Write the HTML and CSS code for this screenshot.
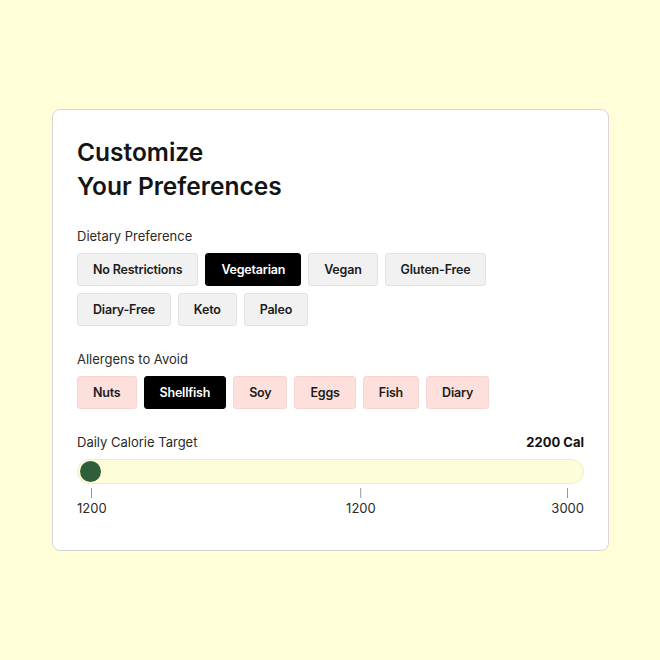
FILE: index.html
```html
<!DOCTYPE html>
<html>
<head>
<meta charset="utf-8">
<link rel="stylesheet" href="styles.css">
</head>
<body>
<div class="page">
  <div class="card">
    <h1 class="title">Customize<br>Your Preferences</h1>

    <div class="section">
      <div class="label">Dietary Preference</div>
      <div class="chips">
        <span class="chip">No Restrictions</span>
        <span class="chip active">Vegetarian</span>
        <span class="chip">Vegan</span>
        <span class="chip">Gluten-Free</span>
        <span class="chip">Diary-Free</span>
        <span class="chip">Keto</span>
        <span class="chip">Paleo</span>
      </div>
    </div>

    <div class="section">
      <div class="label">Allergens to Avoid</div>
      <div class="chips">
        <span class="chip pink">Nuts</span>
        <span class="chip active">Shellfish</span>
        <span class="chip pink">Soy</span>
        <span class="chip pink">Eggs</span>
        <span class="chip pink">Fish</span>
        <span class="chip pink">Diary</span>
      </div>
    </div>

    <div class="section">
      <div class="label-row">
        <span class="label">Daily Calorie Target</span>
        <span class="value">2200 Cal</span>
      </div>
      <div class="track">
        <span class="thumb"></span>
      </div>
      <div class="scale">
        <div class="mark"><span class="tick"></span><span class="num">1200</span></div>
        <div class="mark mid" style="left: 56%"><span class="tick"></span><span class="num">1200</span></div>
        <div class="mark"><span class="tick"></span><span class="num">3000</span></div>
      </div>
    </div>
  </div>
</div>
</body>
</html>
```

FILE: styles.css
```css
* { box-sizing: border-box; }
html, body {
  margin: 0;
  padding: 0;
  background: #fffed9;
  font-family: Inter, "Liberation Sans", sans-serif;
  color: #111;
}
.page {
  width: 660px;
  height: 660px;
  padding: 109px 51px 0 52px;
}
.card {
  background: #fff;
  border: 1px solid #d6d6d6;
  border-radius: 8px;
  padding: 25px 24px 30px 24px;
  height: 442px;
}
.title {
  margin: 0;
  font-size: 24.5px;
  line-height: 34px;
  font-weight: 600;
  letter-spacing: 0;
  color: #141414;
}
.section {
  margin-top: 25px;
}
.label {
  font-size: 13px;
  line-height: 16px;
  color: #2a2a2a;
}
.chips {
  display: flex;
  flex-wrap: wrap;
  gap: 7px 7px;
  margin-top: 9px;
}
.chip {
  display: inline-block;
  font-size: 12.5px;
  line-height: 15px;
  font-weight: 600;
  letter-spacing: -0.2px;
  padding: 8px 15px;
  border: 1px solid #e2e2e2;
  border-radius: 3px;
  background: #f1f1f1;
  color: #1c1c1c;
}
.chip.pink {
  background: #fde0db;
  border-color: #f6d6d1;
}
.chip.active {
  background: #000;
  border-color: #000;
  color: #fff;
}
.label-row {
  display: flex;
  justify-content: space-between;
  align-items: baseline;
}
.value {
  font-size: 13px;
  line-height: 16px;
  font-weight: 700;
  color: #111;
}
.track {
  margin-top: 9px;
  height: 25px;
  border: 1px solid #efeccb;
  border-radius: 13px;
  background: #fefdd9;
  padding: 1px 2px;
}
.thumb {
  display: block;
  width: 21px;
  height: 21px;
  border-radius: 50%;
  background: #2e5e3a;
}
.scale {
  position: relative;
  display: flex;
  justify-content: space-between;
  margin-top: 4px;
}
.mark {
  display: flex;
  flex-direction: column;
  align-items: center;
}
.mark.mid {
  position: absolute;
  top: 0;
  transform: translateX(-50%);
}
.tick {
  width: 1px;
  height: 10px;
  background: #9a9a9a;
}
.num {
  margin-top: 2px;
  font-size: 13px;
  line-height: 16px;
  color: #2a2a2a;
}
```
